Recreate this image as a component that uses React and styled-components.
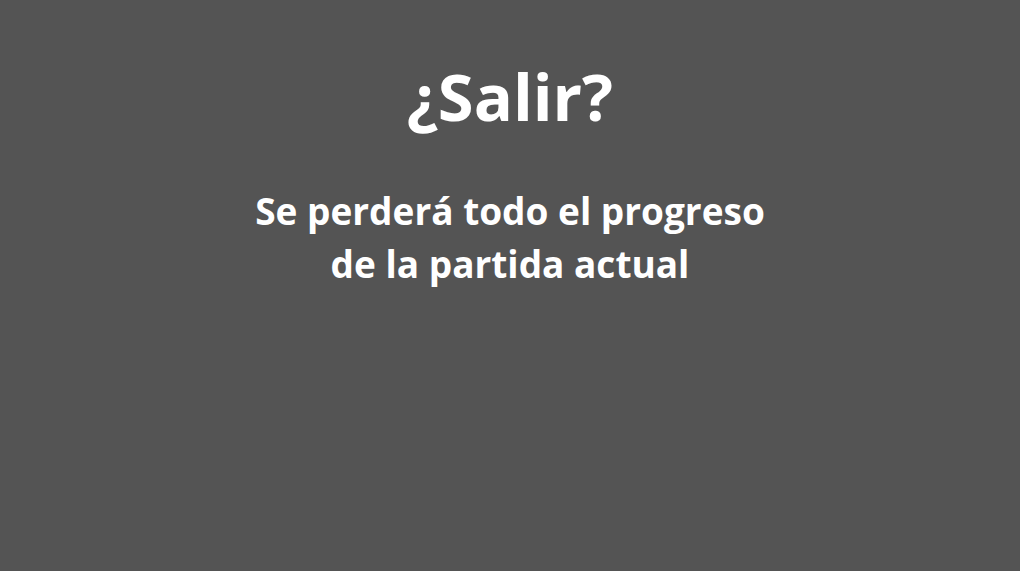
import React from "react";
import styled, { createGlobalStyle } from "styled-components";

const GlobalStyle = createGlobalStyle`
  html, body {
    margin: 0;
    padding: 0;
    background: #545454;
  }
  body {
    font-family: "Open Sans", "Liberation Sans", sans-serif;
  }
`;

const Screen = styled.div`
  width: 100vw;
  height: 100vh;
  background: #545454;
  display: flex;
  flex-direction: column;
  align-items: center;
  color: #ffffff;
  text-align: center;
`;

const Title = styled.h1`
  margin: 52px 0 0;
  font-size: 65px;
  font-weight: 700;
  line-height: 88px;
`;

const Message = styled.p`
  margin: 44px 0 0;
  font-size: 37px;
  font-weight: 700;
  line-height: 53px;
`;

const App = () => {
  return (
    <>
      <GlobalStyle />
      <Screen>
        <Title>¿Salir?</Title>
        <Message>
          Se perderá todo el progreso
          <br />
          de la partida actual
        </Message>
      </Screen>
    </>
  );
};

export default App;
